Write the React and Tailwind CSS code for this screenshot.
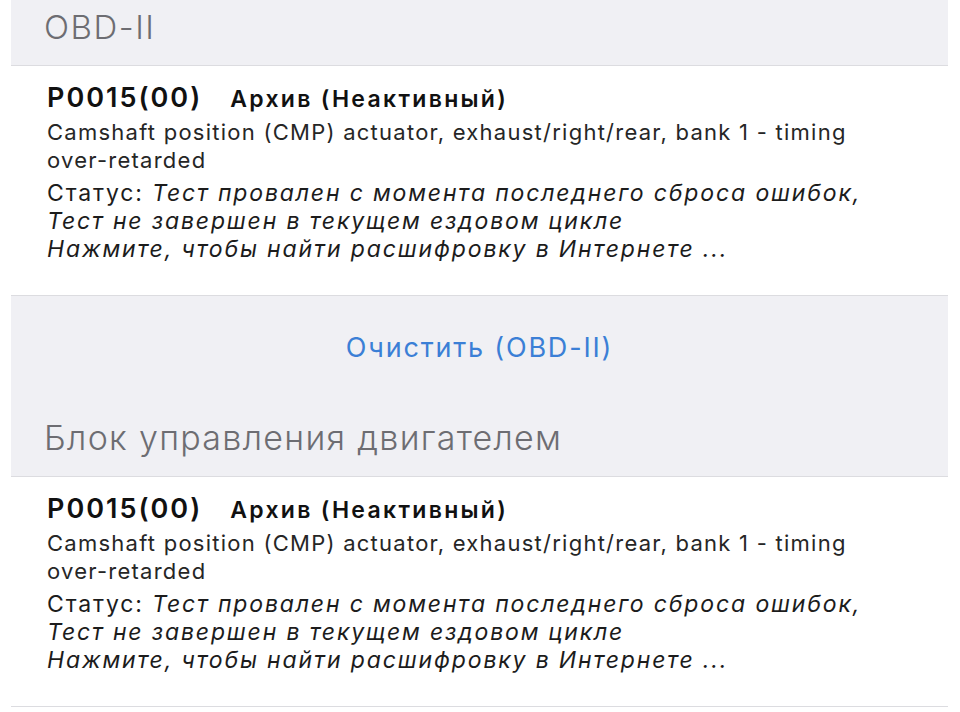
import React from "react";

function Entry() {
  return (
    <div className="bg-white border-b border-[#dcdce0] pl-[36px] pr-4 pt-[15px] pb-[32px]">
      <div className="flex items-baseline leading-[34px] text-[#111]">
        <span className="text-[27px] font-semibold tracking-[2px]">P0015(00)</span>
        <span className="ml-[28px] text-[23px] font-semibold tracking-[2.3px]">Архив (Неактивный)</span>
      </div>
      <div className="mt-[2px] text-[22px] leading-[28px] tracking-[1.25px] text-[#262626]">
        Camshaft position (CMP) actuator, exhaust/right/rear, bank 1 - timing
        <br />
        over-retarded
      </div>
      <div className="mt-[5px] text-[23px] leading-[28px] tracking-[1.85px] text-[#1c1c1c]">
        Статус: <i>Тест провален с момента последнего сброса ошибок,</i>
        <br />
        <i>Тест не завершен в текущем ездовом цикле</i>
        <br />
        <i>Нажмите, чтобы найти расшифровку в Интернете ...</i>
      </div>
    </div>
  );
}

export default function App() {
  return (
    <div
      className="w-[960px] h-[712px] bg-white overflow-hidden"
      style={{ fontFamily: "Inter, 'Noto Sans', sans-serif" }}
    >
      <div className="mx-[11px] w-[937px]">
        <div className="bg-[#f0f0f4] h-[66px] border-b border-[#dcdce0] pl-[33px] pt-[7px]">
          <span className="text-[33px] leading-[40px] font-light tracking-[1.5px] text-[#6d6d72]">OBD-II</span>
        </div>
        <Entry />
        <div className="bg-[#f0f0f4] border-b border-[#dcdce0]">
          <div className="h-[104px] flex items-center justify-center">
            <span className="text-[27px] leading-[34px] tracking-[1.8px] text-[#3b7fd6]">Очистить (OBD-II)</span>
          </div>
          <div className="h-[76px] pl-[33px] pt-[18px]">
            <span className="text-[34px] leading-[40px] font-light tracking-[1.3px] text-[#6d6d72]">Блок управления двигателем</span>
          </div>
        </div>
        <Entry />
      </div>
    </div>
  );
}
